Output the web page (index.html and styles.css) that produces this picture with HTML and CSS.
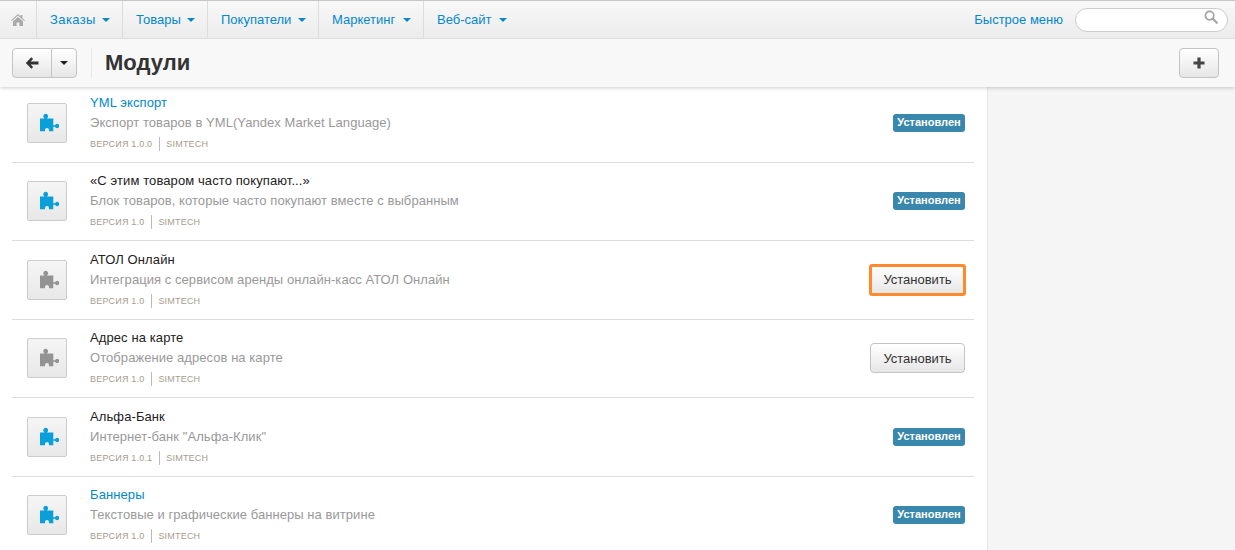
FILE: index.html
```html
<!DOCTYPE html>
<html lang="ru">
<head>
<meta charset="utf-8">
<title>Модули</title>
<link rel="stylesheet" href="styles.css">
</head>
<body>
<svg class="defs" width="0" height="0" aria-hidden="true">
  <symbol id="puzzle" viewBox="0 0 20 20">
    <path d="M1 5.5H5.6V5.4A2.4 2.4 0 1 1 7.8 5.4V5.5H14.3V12.2H16A2.2 2.2 0 1 1 16 13.8H14.3V18.3H10V17A2 2 0 0 0 6 17V18.3H1Z" fill="currentColor"/>
  </symbol>
</svg>
<nav class="topbar">
  <a class="nav-home" href="#" aria-label="Главная">
    <svg width="14" height="12" viewBox="0 0 14 12"><path d="M7 0l2.6 2.3V1h1.8v2.9L14 6.2l-.7.7L7 1.6.7 6.9 0 6.2zM2 7.3L7 3l5 4.3V12H8.4V8.6H5.6V12H2z" fill="#a9a9a9"/></svg>
  </a>
  <a class="nav-item orders" href="#">Заказы<span class="caret"></span></a>
  <a class="nav-item goods" href="#">Товары<span class="caret"></span></a>
  <a class="nav-item buyers" href="#">Покупатели<span class="caret"></span></a>
  <a class="nav-item marketing" href="#">Маркетинг<span class="caret"></span></a>
  <a class="nav-item website" href="#">Веб-сайт<span class="caret"></span></a>
  <a class="quick" href="#">Быстрое меню</a>
  <div class="search">
    <svg width="14" height="14" viewBox="0 0 14 14"><circle cx="5.6" cy="5.6" r="4.2" fill="none" stroke="#a5a5a5" stroke-width="1.8"/><path d="M8.8 8.8l4 4" stroke="#a5a5a5" stroke-width="2.2" stroke-linecap="round"/></svg>
  </div>
</nav>
<header class="toolbar">
  <div class="btn-group">
    <button class="tool-btn back" aria-label="Назад">
      <svg width="14" height="12" viewBox="0 0 14 12"><path d="M6.4.3l1.7 1.7L5.6 4.4H13.5v3.2H5.6l2.5 2.4-1.7 1.7L.8 6z" fill="#333"/></svg>
    </button>
    <button class="tool-btn more" aria-label="Ещё"><span class="caret dark"></span></button>
  </div>
  <h1 class="title">Модули</h1>
  <button class="tool-btn plus" aria-label="Добавить">
    <svg width="12" height="12" viewBox="0 0 12 12"><path d="M4.4.5h3.2v3.9h3.9v3.2H7.6v3.9H4.4V7.6H.5V4.4h3.9z" fill="#444"/></svg>
  </button>
</header>
<div class="content">
  <main class="modules">
    <article class="row">
      <div class="icon on"><svg width="20" height="20"><use href="#puzzle"/></svg></div>
      <div class="info">
        <a class="name link" href="#">YML экспорт</a>
        <p class="desc">Экспорт товаров в YML(Yandex Market Language)</p>
        <p class="meta"><span>ВЕРСИЯ 1.0.0</span><span>SIMTECH</span></p>
      </div>
      <span class="badge">Установлен</span>
    </article>
    <article class="row">
      <div class="icon on"><svg width="20" height="20"><use href="#puzzle"/></svg></div>
      <div class="info">
        <a class="name" href="#">«С этим товаром часто покупают...»</a>
        <p class="desc">Блок товаров, которые часто покупают вместе с выбранным</p>
        <p class="meta"><span>ВЕРСИЯ 1.0</span><span>SIMTECH</span></p>
      </div>
      <span class="badge">Установлен</span>
    </article>
    <article class="row">
      <div class="icon off"><svg width="20" height="20"><use href="#puzzle"/></svg></div>
      <div class="info">
        <a class="name" href="#">АТОЛ Онлайн</a>
        <p class="desc">Интеграция с сервисом аренды онлайн-касс АТОЛ Онлайн</p>
        <p class="meta"><span>ВЕРСИЯ 1.0</span><span>SIMTECH</span></p>
      </div>
      <button class="install focused">Установить</button>
    </article>
    <article class="row">
      <div class="icon off"><svg width="20" height="20"><use href="#puzzle"/></svg></div>
      <div class="info">
        <a class="name" href="#">Адрес на карте</a>
        <p class="desc">Отображение адресов на карте</p>
        <p class="meta"><span>ВЕРСИЯ 1.0</span><span>SIMTECH</span></p>
      </div>
      <button class="install">Установить</button>
    </article>
    <article class="row">
      <div class="icon on"><svg width="20" height="20"><use href="#puzzle"/></svg></div>
      <div class="info">
        <a class="name" href="#">Альфа-Банк</a>
        <p class="desc">Интернет-банк "Альфа-Клик"</p>
        <p class="meta"><span>ВЕРСИЯ 1.0.1</span><span>SIMTECH</span></p>
      </div>
      <span class="badge">Установлен</span>
    </article>
    <article class="row">
      <div class="icon on"><svg width="20" height="20"><use href="#puzzle"/></svg></div>
      <div class="info">
        <a class="name link" href="#">Баннеры</a>
        <p class="desc">Текстовые и графические баннеры на витрине</p>
        <p class="meta"><span>ВЕРСИЯ 1.0</span><span>SIMTECH</span></p>
      </div>
      <span class="badge">Установлен</span>
    </article>
  </main>
  <aside class="sidebar"></aside>
</div>
</body>
</html>
```
FILE: styles.css
```css
* { box-sizing: border-box; }
html, body { height: 100%; }
body {
  margin: 0;
  overflow: hidden;
  font-family: "Liberation Sans", Arial, sans-serif;
  font-size: 13px;
  color: #333;
  background: #fff;
  display: flex;
  flex-direction: column;
}
.defs { position: absolute; }
a { text-decoration: none; }

.topbar {
  flex: none;
  height: 39px;
  display: flex;
  align-items: stretch;
  border-top: 1px solid #c9c7c4;
  border-bottom: 1px solid #ddd;
  background: linear-gradient(#f8f8f8, #ececec);
  position: relative;
  z-index: 3;
}
.nav-home {
  width: 37px;
  display: flex;
  align-items: center;
  justify-content: center;
  padding-right: 1px;
  border-right: 1px solid #dcdcdc;
}
.nav-item {
  display: flex;
  align-items: center;
  padding: 0 12px 0 13px;
  color: #0388cc;
  border-right: 1px solid #dcdcdc;
}
.orders { width: 86px; letter-spacing: .4px; }
.goods { width: 85px; }
.buyers { width: 111px; }
.marketing { width: 105px; }
.website { width: 95px; border-right: 0; }
.nav-item .caret { margin-left: auto; }
.caret {
  width: 0;
  height: 0;
  border-left: 4px solid transparent;
  border-right: 4px solid transparent;
  border-top: 4px solid #0388cc;
}
.caret.dark { border-top-color: #222; }
.quick {
  margin-left: auto;
  align-self: center;
  color: #0388cc;
}
.search {
  align-self: center;
  width: 153px;
  height: 24px;
  margin: 0 7px 0 12px;
  padding: 1px 9px;
  display: flex;
  justify-content: flex-end;
  background: #fff;
  border: 1px solid #ccc;
  border-radius: 12px;
}

.toolbar {
  flex: none;
  height: 48px;
  display: flex;
  align-items: center;
  padding: 0 16px 0 12px;
  background: #f8f8f8;
  box-shadow: 0 1px 4px rgba(0,0,0,.2);
  position: relative;
  z-index: 2;
}
.btn-group { display: flex; }
.tool-btn {
  height: 30px;
  display: flex;
  align-items: center;
  justify-content: center;
  padding: 0;
  background: linear-gradient(#fff, #e6e6e6);
  border: 1px solid #c4c4c4;
  border-radius: 4px;
}
.back { width: 40px; border-radius: 4px 0 0 4px; }
.more { width: 26px; margin-left: -1px; border-radius: 0 4px 4px 0; }
.plus { width: 40px; margin-left: auto; }
.title {
  margin: 0 0 0 14px;
  padding-left: 13px;
  border-left: 1px solid #e8e8e8;
  font-size: 22px;
  line-height: 30px;
  font-weight: 700;
  color: #333;
}

.content {
  flex: 1;
  min-height: 0;
  display: flex;
  margin-top: -3px;
}
.modules { width: 987px; flex: none; padding: 0 13px 0 12px; }
.sidebar {
  flex: 1;
  background: #f5f5f5;
  border-left: 1px solid #e6e6e6;
}
.row {
  height: 78.5px;
  display: flex;
  align-items: center;
  padding: 0 9px 0 15px;
  border-bottom: 1px solid #ddd;
}
.icon {
  flex: none;
  width: 40px;
  height: 40px;
  padding-left: 4px;
  display: flex;
  align-items: center;
  justify-content: center;
  background: linear-gradient(#f5f5f5, #e8e8e8);
  border: 1px solid #ccc;
  border-radius: 2px;
}
.icon.on { color: #0a9fd8; }
.icon.off { color: #939393; }
.info { flex: 1; margin-left: 23px; padding-bottom: 2px; }
.name { display: block; font-size: 13px; line-height: 20px; color: #222; letter-spacing: .1px; }
.name.link { color: #0388cc; }
.desc { margin: 0; font-size: 13px; line-height: 20px; color: #999; letter-spacing: .06px; }
.meta {
  margin: 4px 0 0;
  display: flex;
  font-size: 9px;
  line-height: 14px;
  color: #a59d8f;
  letter-spacing: .2px;
}
.meta span + span { margin-left: 7px; padding-left: 6px; border-left: 1px solid #bbb; }
.badge {
  flex: none;
  width: 72px;
  height: 18px;
  line-height: 17px;
  text-align: center;
  color: #fff;
  font-size: 11px;
  font-weight: 700;
  background: #3a87ad;
  border-radius: 3px;
}
.install {
  flex: none;
  width: 95px;
  height: 30px;
  padding: 0;
  font: 13px "Liberation Sans", Arial, sans-serif;
  color: #333;
  background: linear-gradient(#fff, #e6e6e6);
  border: 1px solid #c4c4c4;
  border-radius: 4px;
}
.install.focused { outline: 3px solid #ff8a2b; outline-offset: -2px; border-radius: 2px; }
```
